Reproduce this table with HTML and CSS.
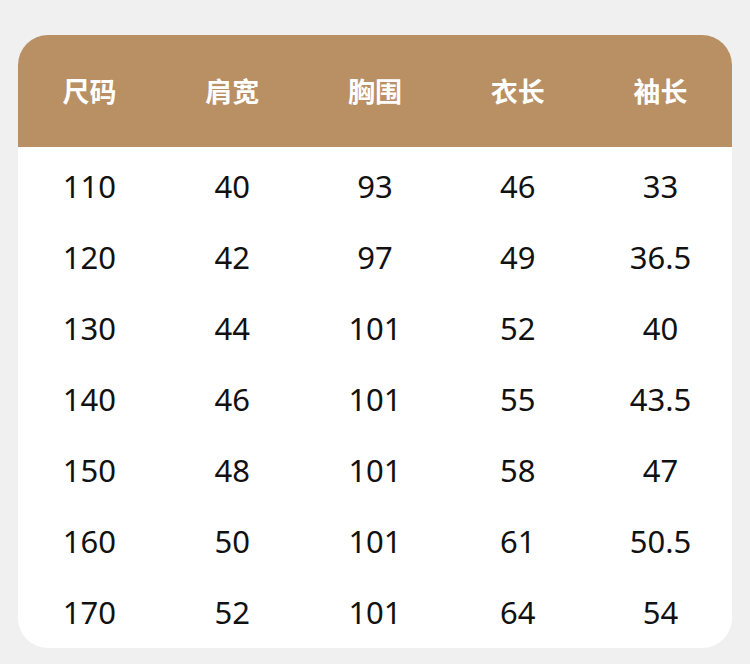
FILE: index.html
```html
<!DOCTYPE html>
<html lang="zh">
<head>
<meta charset="utf-8">
<link rel="stylesheet" href="styles.css">
</head>
<body>
<div class="card">
  <div class="row head">
    <div>尺码</div><div>肩宽</div><div>胸围</div><div>衣长</div><div>袖长</div>
  </div>
  <div class="body">
    <div class="row"><div>110</div><div>40</div><div>93</div><div>46</div><div>33</div></div>
    <div class="row"><div>120</div><div>42</div><div>97</div><div>49</div><div>36.5</div></div>
    <div class="row"><div>130</div><div>44</div><div>101</div><div>52</div><div>40</div></div>
    <div class="row"><div>140</div><div>46</div><div>101</div><div>55</div><div>43.5</div></div>
    <div class="row"><div>150</div><div>48</div><div>101</div><div>58</div><div>47</div></div>
    <div class="row"><div>160</div><div>50</div><div>101</div><div>61</div><div>50.5</div></div>
    <div class="row"><div>170</div><div>52</div><div>101</div><div>64</div><div>54</div></div>
  </div>
</div>
</body>
</html>
```

FILE: styles.css
```css
html, body {
  margin: 0;
  padding: 0;
  background: #f0f0f0;
}
body {
  padding: 35px 18px 16px 18px;
  font-family: "Noto Sans", "Noto Sans CJK SC", sans-serif;
}
.card {
  width: 714px;
  height: 613px;
  background: #ffffff;
  border-radius: 30px;
  overflow: hidden;
}
.row {
  display: grid;
  grid-template-columns: repeat(5, 1fr);
  height: 71px;
  align-items: center;
  text-align: center;
  font-size: 31px;
  color: #111111;
}
.row > div {
  line-height: 71px;
}
.head {
  height: 112px;
  background: #b98f64;
  color: #ffffff;
  font-family: "Noto Sans CJK SC", sans-serif;
  font-weight: 700;
  font-size: 27px;
}
.head > div {
  line-height: 112px;
}
.body {
  padding-top: 4px;
}
```
